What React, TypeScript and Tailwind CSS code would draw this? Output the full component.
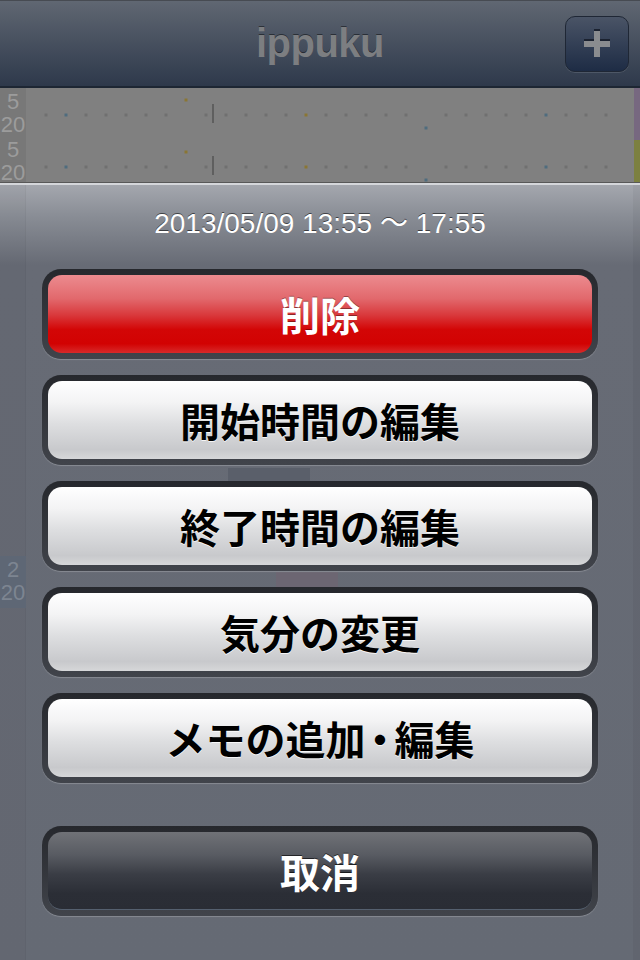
import React from "react";

// ippuku: record action sheet over the timeline

const actions = [
  { label: "開始時間の編集" },
  { label: "終了時間の編集" },
  { label: "気分の変更" },
  { label: "メモの追加・編集" },
];

const dotXs = [
  46, 66, 86, 106, 126, 146, 166, 206, 226, 246, 266, 286, 306, 326, 346, 366,
  386, 406, 446, 466, 486, 506, 526, 546, 566, 586, 606,
];

const TimelineRow = ({ top }: { top: number }) => (
  <g transform={`translate(-26 ${top})`}>
    {dotXs.map((x) => {
      let fill = "#707070";
      if (x === 66 || x === 546) fill = "#4f6c7e";
      if (x === 306) fill = "#8a7634";
      return <rect key={x} x={x - 1.5} y={25.5} width={3} height={3} fill={fill} />;
    })}
    <rect x={184.5} y={10.5} width={3} height={3} fill="#8a7634" />
    <rect x={424.5} y={38.5} width={3} height={3} fill="#4f6c7e" />
    <rect x={212} y={16} width={2} height={19} fill="#5f5f5f" />
  </g>
);

// narrower middle dot, as on the device
const renderLabel = (label: string) =>
  label.split("・").flatMap((part, i) =>
    i === 0
      ? [part]
      : [
          <span key={i} className="-mx-[0.14em]">
            ・
          </span>,
          part,
        ]
  );

const Well = ({ children }: { children: React.ReactNode }) => (
  <div className="rounded-[19px] p-[6px] bg-gradient-to-b from-[#26282d] to-[#41444b] shadow-[0_1px_1px_rgba(255,255,255,0.22)]">
    {children}
  </div>
);

export default function App() {
  return (
    <div className="w-[640px] h-[960px] flex flex-col overflow-hidden bg-[#656a74] font-['Liberation_Sans','Noto_Sans_CJK_JP',sans-serif]">
      {/* Nav bar (dimmed) */}
      <header className="h-[88px] shrink-0 grid grid-cols-[1fr_auto_1fr] items-center bg-gradient-to-b from-[#606772] to-[#2e394b] border-t border-[#474b52] border-b-2 border-b-[#1d2633]">
        <div />
        <h1 className="text-[40px] font-bold text-[#7c7e81] tracking-[-0.5px] [text-shadow:0_-1px_0_rgba(0,0,0,0.45)] leading-none pb-[2px]">
          ippuku
        </h1>
        <div className="flex justify-end pr-[11px]">
          <button className="w-[64px] h-[56px] rounded-[10px] border border-[#1f2735] bg-gradient-to-b from-[#4a5466] to-[#1e2c45] shadow-[0_1px_0_rgba(255,255,255,0.12)] flex items-center justify-center">
            <svg width="28" height="30" viewBox="0 0 28 30">
              <rect x="11" y="0" width="6" height="2" fill="#1b2230" />
              <rect x="1" y="10" width="26" height="2" fill="#1b2230" />
              <rect x="11" y="2" width="6" height="26" fill="#8a8c8f" />
              <rect x="1" y="12" width="26" height="6" fill="#8a8c8f" />
            </svg>
          </button>
        </div>
      </header>

      {/* Timeline strip (dimmed) */}
      <div className="h-[95px] shrink-0 flex bg-[#808080] border-b border-[#585858]">
        <div className="w-[26px] bg-[#787878] flex flex-col text-[#9c9c9c] text-[22px] leading-[23px] text-center overflow-hidden">
          <div className="h-[52px] pt-[2px]">
            <div>5</div>
            <div>20</div>
          </div>
          <div className="h-[52px] pt-[2px]">
            <div>5</div>
            <div>20</div>
          </div>
        </div>
        <svg className="flex-1" width="608" height="94" viewBox="0 0 608 94">
          <TimelineRow top={0} />
          <TimelineRow top={52} />
        </svg>
        <div className="w-[6px] flex flex-col">
          <div className="h-[52px] bg-[#776880]" />
          <div className="flex-1 bg-[#7c8040]" />
        </div>
      </div>

      {/* Action sheet */}
      <div className="flex-1 relative border-t-2 border-[#d4d6da] bg-[linear-gradient(to_bottom,#a4a7ae_0px,#8a8e96_30px,#676b75_80px,#656a74_100%)]">
        {/* timeline showing faintly through the sheet */}
        <div className="absolute inset-0 pointer-events-none">
          <div className="absolute left-0 top-0 bottom-0 w-[26px] bg-[rgba(0,0,0,0.02)] border-r border-[rgba(0,0,0,0.03)]" />
          <div className="absolute left-0 top-[371px] w-[26px] h-[52px] bg-[#5e6775] text-[#7d8591] text-[22px] leading-[23px] text-center pt-[2px]">
            <div>2</div>
            <div>20</div>
          </div>
          <div className="absolute left-[228px] top-[283px] w-[82px] h-[22px] bg-[#5a5f6a]" />
          <div className="absolute left-[276px] top-[387px] w-[62px] h-[22px] bg-[#6c6672]" />
          <div className="absolute right-0 top-0 bottom-0 w-[7px] bg-[rgba(0,0,0,0.04)]" />
        </div>

        <div className="relative px-[42px] flex flex-col">
          <p className="pt-[22px] h-[84px] text-center text-[28px] leading-[34px] text-white [text-shadow:0_-1px_0_rgba(0,0,0,0.55)]">
            2013/05/09 13:55 〜 17:55
          </p>

          <div className="flex flex-col gap-[16px] font-['Noto_Sans_CJK_JP',sans-serif] font-bold text-[40px]">
            <Well>
              <button className="w-full h-[78px] rounded-[14px] bg-[linear-gradient(to_bottom,#ec8b8f_0%,#e2696d_30%,#d9373a_52%,#d30606_70%,#d20202_88%,#d82a2a_100%)] text-white [text-shadow:0_-1px_0_rgba(0,0,0,0.35)] leading-none">
                削除
              </button>
            </Well>
            {actions.map((a) => (
              <Well key={a.label}>
                <button className="w-full h-[78px] rounded-[14px] bg-[linear-gradient(to_bottom,#ffffff_0%,#f3f3f4_28%,#dddee0_55%,#c8c9cc_88%,#d6d7d9_100%)] text-black [text-shadow:0_1px_0_rgba(255,255,255,0.8)] leading-none">
                  {renderLabel(a.label)}
                </button>
              </Well>
            ))}

            <div className="mt-[27px]">
              <Well>
                <button className="w-full h-[78px] rounded-[14px] border-b border-[#55606f] bg-[linear-gradient(to_bottom,#707277_0%,#585b62_30%,#3a3d45_55%,#2b2e36_80%,#2a2d35_100%)] text-white [text-shadow:0_-1px_0_rgba(0,0,0,0.6)] leading-none">
                  取消
                </button>
              </Well>
            </div>
          </div>
        </div>
      </div>
    </div>
  );
}
